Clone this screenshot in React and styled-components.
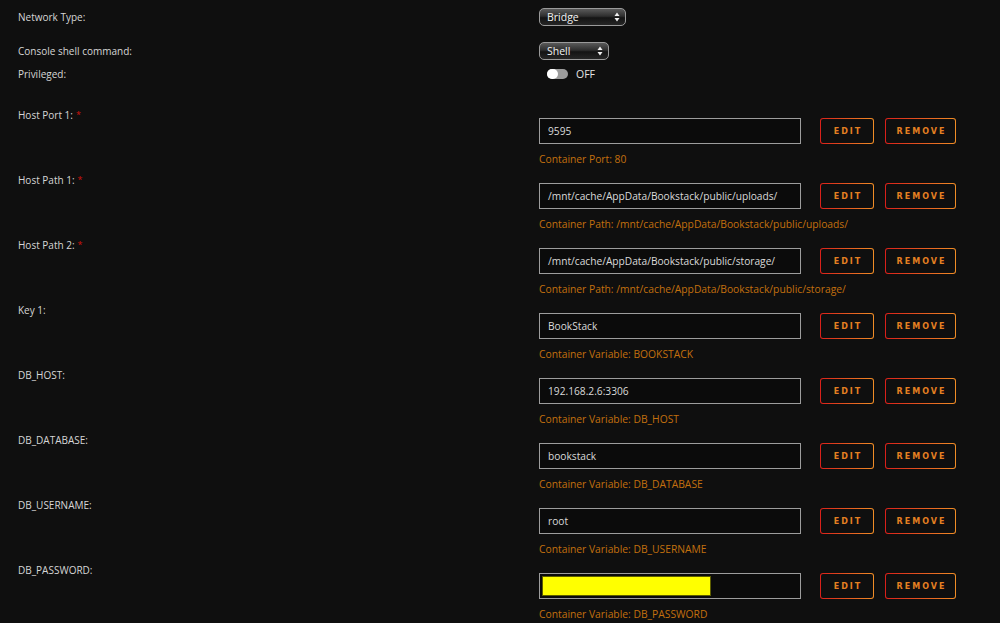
import styled, { createGlobalStyle } from 'styled-components';

const GlobalStyle = createGlobalStyle`
  html, body {
    margin: 0;
    padding: 0;
    background: #0f0f0f;
  }
  body {
    font-family: "Open Sans", "Noto Sans", sans-serif;
    color: #d6d6d6;
  }
`;

const Page = styled.div`
  width: 1000px;
  height: 623px;
  overflow: hidden;
  padding-top: 8px;
  box-sizing: border-box;
  background: #0f0f0f;
`;

const SimpleRow = styled.div`
  display: grid;
  grid-template-columns: 521px 1fr;
  align-items: center;
  padding-left: 18px;
  height: ${props => props.h}px;
  margin-bottom: ${props => props.mb || 0}px;
`;

const Label = styled.div`
  font-size: 10px;
  line-height: 14px;
  color: #d6d6d6;
`;

const Required = styled.span`
  color: #d0120c;
  margin-left: 3px;
  font-size: 9px;
  vertical-align: top;
`;

const Select = styled.div`
  display: flex;
  align-items: center;
  justify-content: space-between;
  box-sizing: border-box;
  width: ${props => props.w}px;
  height: ${props => props.h}px;
  padding: 0 5px 0 7px;
  border: 1px solid #9a9a9a;
  border-radius: 5px;
  background: linear-gradient(#5a5a5a 0%, #2e2e2e 45%, #141414 55%, #262626 100%);
  color: #f2f2f2;
  font-size: 10.5px;
`;

const ToggleWrap = styled.div`
  display: flex;
  align-items: center;
  gap: 8px;
  padding-left: 8px;
`;

const Track = styled.div`
  position: relative;
  width: 21px;
  height: 10px;
  border-radius: 5px;
  background: #9c9c9c;
`;

const Knob = styled.div`
  position: absolute;
  left: 0;
  top: 0;
  width: 11px;
  height: 10px;
  border-radius: 5px;
  background: #ffffff;
`;

const ToggleText = styled.span`
  font-size: 10.5px;
  color: #e4e4e4;
`;

const ConfigRow = styled.div`
  display: grid;
  grid-template-columns: 521px 1fr;
  padding-left: 18px;
  height: 65px;
`;

const Field = styled.div`
  padding-top: 10px;
`;

const Controls = styled.div`
  display: flex;
  align-items: center;
`;

const Input = styled.div`
  box-sizing: border-box;
  width: 262px;
  height: 26px;
  display: flex;
  align-items: center;
  padding: ${props => (props.masked ? '2px' : '0 8px')};
  border: 1px solid #9d9d9d;
  background: #0b0b0b;
  color: #dadada;
  font-size: 10.2px;
  white-space: nowrap;
  overflow: hidden;
`;

const Masked = styled.span`
  display: block;
  width: 169px;
  height: 20px;
  background: #ffff00;
  box-shadow: inset 0 0 0 1px #5e5e00;
`;

const ActionButton = styled.button`
  box-sizing: border-box;
  width: ${props => props.w}px;
  height: 26px;
  margin-left: ${props => props.ml}px;
  border: 1.5px solid transparent;
  border-radius: 3px;
  background:
    linear-gradient(#0f0f0f, #0f0f0f) padding-box,
    linear-gradient(90deg, #d9201a, #f08d26) border-box;
  color: #e58022;
  font-family: "DejaVu Sans", "Open Sans", sans-serif;
  font-size: 8px;
  font-weight: bold;
  letter-spacing: 2px;
  padding: 0 0 0 2px;
  cursor: pointer;
`;

const Caption = styled.div`
  margin-top: 8px;
  font-size: 10.3px;
  line-height: 14px;
  color: #c3700e;
  white-space: nowrap;
`;

const Arrows = () => (
  <svg width="6" height="10" viewBox="0 0 6 10">
    <path d="M3 0.5 L5.5 4 L0.5 4 Z" fill="#f0f0f0" />
    <path d="M3 9.5 L5.5 6 L0.5 6 Z" fill="#f0f0f0" />
  </svg>
);

const configs = [
  { label: 'Host Port 1:', required: true, value: '9595', caption: 'Container Port: 80' },
  { label: 'Host Path 1:', required: true, value: '/mnt/cache/AppData/Bookstack/public/uploads/', caption: 'Container Path: /mnt/cache/AppData/Bookstack/public/uploads/' },
  { label: 'Host Path 2:', required: true, value: '/mnt/cache/AppData/Bookstack/public/storage/', caption: 'Container Path: /mnt/cache/AppData/Bookstack/public/storage/' },
  { label: 'Key 1:', value: 'BookStack', caption: 'Container Variable: BOOKSTACK' },
  { label: 'DB_HOST:', value: '192.168.2.6:3306', caption: 'Container Variable: DB_HOST' },
  { label: 'DB_DATABASE:', value: 'bookstack', caption: 'Container Variable: DB_DATABASE' },
  { label: 'DB_USERNAME:', value: 'root', caption: 'Container Variable: DB_USERNAME' },
  { label: 'DB_PASSWORD:', masked: true, caption: 'Container Variable: DB_PASSWORD' },
];

const App = () => (
  <Page>
    <GlobalStyle />
    <SimpleRow h={18} mb={16}>
      <Label>Network Type:</Label>
      <Select w={87} h={18}>
        <span>Bridge</span>
        <Arrows />
      </Select>
    </SimpleRow>
    <SimpleRow h={17} mb={7}>
      <Label>Console shell command:</Label>
      <Select w={70} h={18}>
        <span>Shell</span>
        <Arrows />
      </Select>
    </SimpleRow>
    <SimpleRow h={16} mb={26}>
      <Label>Privileged:</Label>
      <ToggleWrap>
        <Track>
          <Knob />
        </Track>
        <ToggleText>OFF</ToggleText>
      </ToggleWrap>
    </SimpleRow>
    {configs.map(c => (
      <ConfigRow key={c.label}>
        <Label>
          {c.label}
          {c.required && <Required>*</Required>}
        </Label>
        <Field>
          <Controls>
            <Input masked={c.masked}>{c.masked ? <Masked /> : c.value}</Input>
            <ActionButton w={54} ml={19}>EDIT</ActionButton>
            <ActionButton w={71} ml={11}>REMOVE</ActionButton>
          </Controls>
          <Caption>{c.caption}</Caption>
        </Field>
      </ConfigRow>
    ))}
  </Page>
);

export default App;
